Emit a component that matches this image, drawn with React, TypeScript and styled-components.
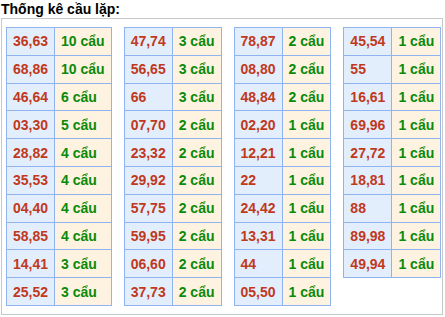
import React from "react";
import styled, { createGlobalStyle } from "styled-components";

const GlobalStyle = createGlobalStyle`
  body {
    margin: 0;
    background: #ffffff;
    font-family: "Liberation Sans", Arial, sans-serif;
  }
`;

const Title = styled.div`
  font-size: 14px;
  font-weight: bold;
  color: #000;
  line-height: 18px;
  padding-left: 1px;
`;

const Box = styled.div`
  margin-left: 1px;
  box-sizing: border-box;
  width: 442px;
  height: 297px;
  border: 1px solid #c8c8c8;
  display: flex;
  align-items: flex-start;
  gap: 12px;
  padding: 8px 4px;
`;

const Table = styled.table`
  border-collapse: collapse;
  font-size: 14px;
  font-weight: bold;
`;

const Row = styled.tr`
  height: 27.8px;
`;

const NumCell = styled.td`
  border: 1px solid #8fb4ef;
  background: #e3eefd;
  color: #c0391c;
  padding: 0 6px;
  text-align: left;
  white-space: nowrap;
`;

const CountCell = styled.td`
  border: 1px solid #8fb4ef;
  background: #fef3e1;
  color: #0a8a0a;
  padding: 0 6px;
  text-align: left;
  white-space: nowrap;
`;

type Item = [string, number];

const columns: Item[][] = [
  [
    ["36,63", 10], ["68,86", 10], ["46,64", 6], ["03,30", 5], ["28,82", 4],
    ["35,53", 4], ["04,40", 4], ["58,85", 4], ["14,41", 3], ["25,52", 3],
  ],
  [
    ["47,74", 3], ["56,65", 3], ["66", 3], ["07,70", 2], ["23,32", 2],
    ["29,92", 2], ["57,75", 2], ["59,95", 2], ["06,60", 2], ["37,73", 2],
  ],
  [
    ["78,87", 2], ["08,80", 2], ["48,84", 2], ["02,20", 1], ["12,21", 1],
    ["22", 1], ["24,42", 1], ["13,31", 1], ["44", 1], ["05,50", 1],
  ],
  [
    ["45,54", 1], ["55", 1], ["16,61", 1], ["69,96", 1], ["27,72", 1],
    ["18,81", 1], ["88", 1], ["89,98", 1], ["49,94", 1],
  ],
];

export default function App() {
  return (
    <>
      <GlobalStyle />
      <Title>Thống kê cầu lặp:</Title>
      <Box>
        {columns.map((col, i) => (
          <Table key={i}>
            <tbody>
              {col.map(([pair, count]) => (
                <Row key={pair}>
                  <NumCell>{pair}</NumCell>
                  <CountCell>{count} cẩu</CountCell>
                </Row>
              ))}
            </tbody>
          </Table>
        ))}
      </Box>
    </>
  );
}
